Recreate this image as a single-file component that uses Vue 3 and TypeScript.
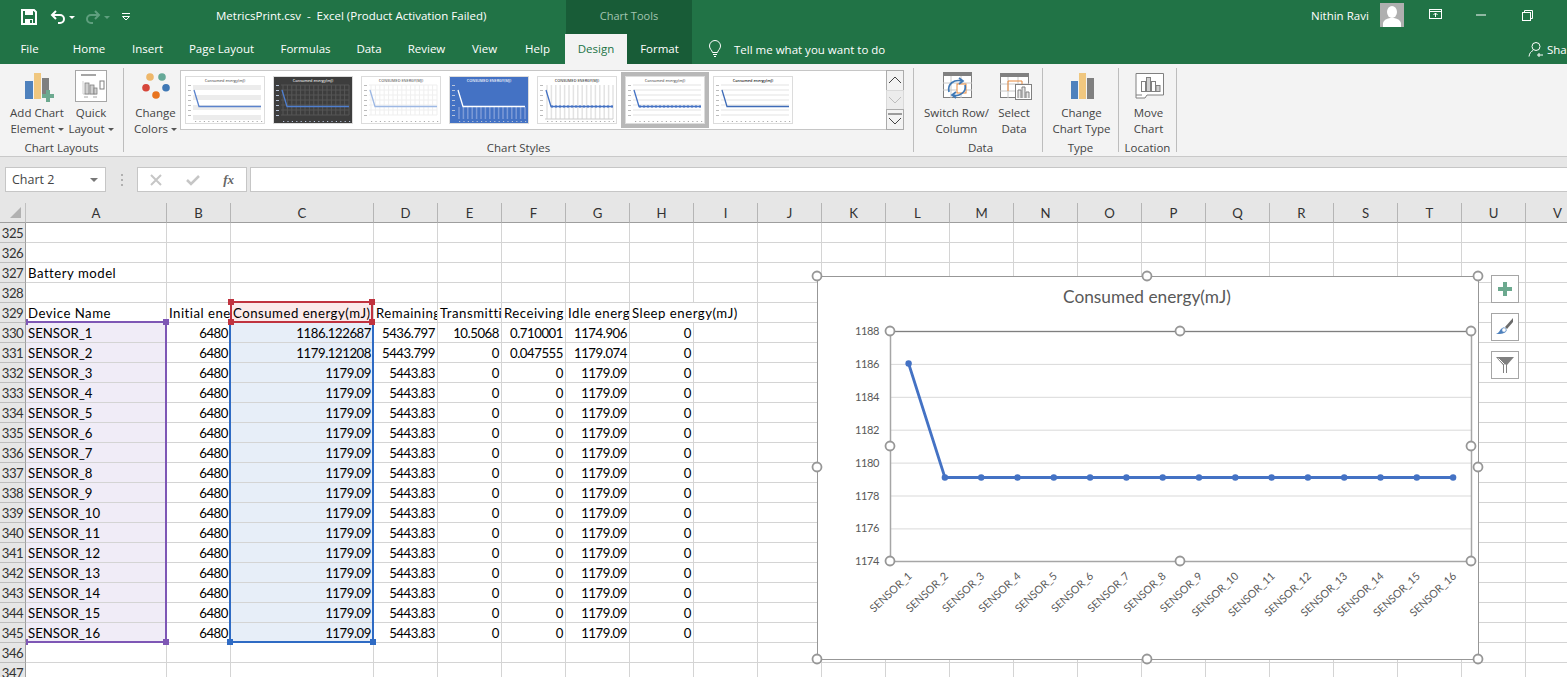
<script setup lang="ts">
interface Cell { key: string; text: string; cls: string }
const letters = 'ABCDEFGHIJKLMNOPQRSTUV'.split('')
const header = ['Device Name', 'Initial energy(mJ)', 'Consumed energy(mJ)', 'Remaining energy', 'Transmitting', 'Receiving energy', 'Idle energy', 'Sleep energy(mJ)']
const dataRows: string[][] = []
for (let i = 1; i <= 16; i++) {
  if (i === 1) dataRows.push(['SENSOR_1', '6480', '1186.122687', '5436.797', '10.5068', '0.710001', '1174.906', '0'])
  else if (i === 2) dataRows.push(['SENSOR_2', '6480', '1179.121208', '5443.799', '0', '0.047555', '1179.074', '0'])
  else dataRows.push([`SENSOR_${i}`, '6480', '1179.09', '5443.83', '0', '0', '1179.09', '0'])
}
const cells: Cell[] = []
for (let r = 325; r <= 347; r++) {
  cells.push({ key: `h${r}`, text: String(r), cls: 'rowhead' })
  for (let c = 0; c < 22; c++) {
    let text = ''
    const cl: string[] = ['cell']
    if (r === 327 && c === 0) { text = 'Battery model'; cl.push('label') }
    if (r === 329 && c < 8) {
      text = header[c]
      cl.push('label')
      if (c === 7) cl.push('span2')
      if (c === 2) cl.push('tint-red')
    }
    if (r === 329 && c === 8) continue
    if (r >= 330 && r <= 345) {
      if (c < 8) text = dataRows[r - 330][c]
      if (c > 0 && c < 8) cl.push('num')
      if (c === 0) cl.push('tint-purple')
      if (c === 2) cl.push('tint-blue')
    }
    cells.push({ key: `${r}-${c}`, text, cls: cl.join(' ') })
  }
}

const tabs = ['File', 'Home', 'Insert', 'Page Layout', 'Formulas', 'Data', 'Review', 'View', 'Help']

interface Thumb { bg: string; line: string; title: string; tcol: string; grid: string; kind: string; picked?: boolean }
const thumbs: Thumb[] = [
  { bg: '#fff', line: '#5b83cc', title: 'Consumed energy(mJ)', tcol: '#6a6a6a', grid: '#ececec', kind: 'bands' },
  { bg: '#3d3d3d', line: '#4f7fd0', title: 'Consumed energy(mJ)', tcol: '#e0e0e0', grid: '#575757', kind: 'both' },
  { bg: '#fff', line: '#9db8e4', title: 'CONSUMED ENERGY(MJ)', tcol: '#6a6a6a', grid: '#efefef', kind: 'both' },
  { bg: '#4472c4', line: '#ffffff', title: 'CONSUMED ENERGY(MJ)', tcol: '#f4f7fd', grid: '#7c9ad6', kind: 'drops' },
  { bg: '#fff', line: '#4472c4', title: 'CONSUMED ENERGY(MJ)', tcol: '#444', grid: '#e3e3e3', kind: 'vbars' },
  { bg: '#fff', line: '#4472c4', title: 'Consumed energy(mJ)', tcol: '#6a6a6a', grid: '#e3e3e3', kind: 'lines', picked: true },
  { bg: '#fff', line: '#3f6cb8', title: 'Consumed energy(mJ)', tcol: '#222', grid: '#e3e3e3', kind: 'lines' }
]
const thumbY = [13, 18, 23, 28, 33, 38, 43]
const thumbX = Array.from({ length: 16 }, (_, i) => 10 + i * 4.4)

const yTicks = [1188, 1186, 1184, 1182, 1180, 1178, 1176, 1174].map((v, i) => ({ v, y: 331.5 + i * 32.9 }))
const pts = Array.from({ length: 16 }, (_, i) => ({
  x: 908.6 + i * 36.3,
  y: i === 0 ? 363.5 : 477.5,
  name: `SENSOR_${i + 1}`
}))
const polyline = pts.map(p => `${p.x},${p.y}`).join(' ')
const chartHandles = [[817, 276], [1147, 276], [1478, 276], [817, 467], [1478, 467], [817, 659], [1147, 659], [1478, 659]]
const plotHandles = [[890, 331], [1180, 331], [1471, 331], [890, 446], [1471, 446], [890, 561], [1180, 561], [1471, 561]]
</script>

<template>
  <div class="app">
    <div class="titlebar">
      <div class="qat">
        <svg class="i-save" width="16" height="16" viewBox="0 0 16 16"><path d="M1 1H13L15 3V15H1Z" fill="none" stroke="#fff" stroke-width="2"/><rect x="4" y="1" width="8" height="5" fill="#fff"/><rect x="4" y="10" width="8" height="5" fill="#fff"/><rect x="9" y="11" width="2" height="3" fill="#217346"/></svg>
        <svg class="i-undo" width="16" height="16" viewBox="0 0 16 16"><path d="M6 2L2 6L6 10M2 6H10A4 4 0 0 1 10 14H8" fill="none" stroke="#fff" stroke-width="2"/></svg>
        <span class="caret"></span>
        <svg class="i-redo" width="16" height="16" viewBox="0 0 16 16"><path d="M10 2L14 6L10 10M14 6H6A4 4 0 0 0 6 14H8" fill="none" stroke="#5f9f7e" stroke-width="2"/></svg>
        <span class="caret dim"></span>
        <svg class="i-cust" width="10" height="8" viewBox="0 0 10 8"><path d="M1 .5H9" stroke="#fff"/><path d="M1.5 3.5H8.500L5 7Z" fill="none" stroke="#fff"/></svg>
      </div>
      <div class="doc">MetricsPrint.csv&nbsp; -&nbsp; Excel (Product Activation Failed)</div>
      <div class="ctx">Chart Tools</div>
      <div class="user">Nithin Ravi</div>
      <div class="avatar">
        <svg width="24" height="24" viewBox="0 0 24 24"><rect width="24" height="24" fill="#afafaf"/><ellipse cx="12" cy="9" rx="5" ry="6" fill="#fff"/><path d="M3 24V20Q4 16 10 15H14Q20 16 21 20V24Z" fill="#fff"/></svg>
      </div>
      <div class="winbtns">
        <svg width="14" height="12" viewBox="0 0 14 12"><rect x=".5" y=".5" width="12" height="9" fill="none" stroke="#fff"/><path d="M.5 2.500H12.500M6.500 8V4M4.500 6L6.500 4L8.500 6" fill="none" stroke="#fff"/></svg>
        <svg width="12" height="12" viewBox="0 0 12 12"><path d="M1 6H11" stroke="#fff"/></svg>
        <svg width="11" height="11" viewBox="0 0 11 11"><rect x=".5" y="2.500" width="8" height="8" fill="none" stroke="#fff"/><path d="M2.500 2.500V.5H10.500V8.500H8.500" fill="none" stroke="#fff"/></svg>
      </div>
    </div>

    <div class="tabs">
      <div v-for="t in tabs" :key="t" class="tab">{{ t }}</div>
      <div class="tab design">Design</div>
      <div class="tab format">Format</div>
      <div class="tell">
        <svg width="14" height="18" viewBox="0 0 14 18"><path d="M4.500 12.500C4 10 1.500 9 1.500 6A5.500 5.500 0 0 1 12.500 6C12.500 9 10 10 9.500 12.500ZM5 14.500H9M6 16.500H8" fill="none" stroke="#fff"/></svg>
        <span>Tell me what you want to do</span>
      </div>
      <div class="share">
        <svg width="16" height="16" viewBox="0 0 16 16"><circle cx="8" cy="5.500" r="4" fill="none" stroke="#fff"/><path d="M1 15.500C1.500 12 3 10.500 5 9.500M11 12V16M9 14H15" fill="none" stroke="#fff"/></svg>
        <span>Sha</span>
      </div>
    </div>

    <div class="ribbon">
      <section class="group g-layouts">
        <div class="btns">
          <div class="btn b-add">
            <svg width="32" height="32" viewBox="0 0 32 32"><rect x="4" y="11" width="8" height="18" fill="#4e81bd"/><rect x="13" y="3" width="7" height="26" fill="#f0c77f"/><rect x="21" y="8" width="7" height="18" fill="#7f7f7f"/><path d="M25 20H29V24H33V28H29V32H25V28H21V24H25Z" fill="#6ca98f"/></svg>
            <div>Add Chart</div><div>Element<i class="dn"></i></div>
          </div>
          <div class="btn b-quick">
            <svg width="32" height="32" viewBox="0 0 32 32"><rect x=".5" y=".5" width="31" height="31" fill="#fff" stroke="#a6a6a6"/><rect x="6" y="4" width="15" height="2" fill="#a6a6a6"/><path d="M8 11V24H22" fill="none" stroke="#d0d0d0"/><rect x="10" y="13" width="4" height="11" fill="#d0d0d0" stroke="#808080" stroke-width=".8"/><rect x="15" y="15" width="4" height="9" fill="#d0d0d0" stroke="#808080" stroke-width=".8"/><rect x="19" y="18" width="3" height="6" fill="#d0d0d0" stroke="#808080" stroke-width=".8"/><rect x="25" y="11" width="4" height="8" fill="none" stroke="#808080"/><path d="M9 27H13M18 27H22" stroke="#a6a6a6"/></svg>
            <div>Quick</div><div>Layout<i class="dn"></i></div>
          </div>
        </div>
        <div class="glabel">Chart Layouts</div>
      </section>

      <section class="group g-styles">
        <div class="btns">
          <div class="btn b-colors">
            <svg width="32" height="32" viewBox="0 0 32 32"><circle cx="10" cy="7" r="3.800" fill="#eeb76a"/><circle cx="22" cy="7" r="3.800" fill="#66a998"/><circle cx="6" cy="17.700" r="3.800" fill="#d6463a"/><circle cx="26" cy="17.700" r="3.800" fill="#3f78b5"/><circle cx="16" cy="25" r="3.800" fill="#e8731e"/></svg>
            <div>Change</div><div>Colors<i class="dn"></i></div>
          </div>
          <div class="gallery">
            <div class="thumbs">
              <div v-for="(t, i) in thumbs" :key="i" class="thumb" :class="{ picked: t.picked }">
                <svg width="80" height="48" viewBox="0 0 80 48">
                  <rect x=".5" y=".5" width="79" height="47" :fill="t.bg" stroke="#dcdcdc"/>
                  <text x="40" y="6" text-anchor="middle" class="ttl" :fill="t.tcol">{{ t.title }}</text>
                  <template v-if="t.kind === 'bands'">
                    <rect v-for="y in [9, 19, 29, 39]" :key="y" x="8" :y="y" width="68" height="5" :fill="t.grid"/>
                  </template>
                  <template v-if="t.kind === 'both' || t.kind === 'lines'">
                    <line v-for="y in thumbY" :key="y" x1="8" x2="76" :y1="y - 4" :y2="y - 4" :stroke="t.grid"/>
                  </template>
                  <template v-if="t.kind === 'both'">
                    <line v-for="x in thumbX" :key="x" :x1="x" :x2="x" y1="9" y2="39" :stroke="t.grid"/>
                  </template>
                  <template v-if="t.kind === 'vbars'">
                    <line v-for="x in thumbX" :key="x" :x1="x" :x2="x" y1="9" y2="43" :stroke="t.grid" stroke-width="1.500"/>
                    <path d="M8 43H76" stroke="#ccc"/>
                  </template>
                  <template v-if="t.kind === 'drops'">
                    <line v-for="x in thumbX" :key="x" :x1="x" :x2="x" y1="31" y2="43" :stroke="t.grid" stroke-width="1.500"/>
                  </template>
                  <rect v-for="y in thumbY" :key="'t' + y" x="3" :y="y - 4" width="3" height="1" :fill="t.kind === 'drops' || t.bg === '#3d3d3d' ? '#b8c4da' : '#bbb'"/>
                  <rect v-for="x in thumbX" :key="'u' + x" :x="x" y="45" width="1.200" height="1" :fill="t.kind === 'drops' || t.bg === '#3d3d3d' ? '#b8c4da' : '#aaa'"/>
                  <path d="M9 14L14 30.500H76" fill="none" :stroke="t.line" stroke-width="1.300"/>
                  <path v-if="t.kind === 'vbars' || t.picked" d="M14 30.500H76" fill="none" :stroke="t.line" stroke-width="2" stroke-dasharray="2 2"/>
                </svg>
              </div>
            </div>
            <div class="spin">
              <div class="sb"><svg width="16" height="10" viewBox="0 0 16 10"><path d="M2 8L8 2L14 8" fill="none" stroke="#444"/></svg></div>
              <div class="sb off"><svg width="16" height="10" viewBox="0 0 16 10"><path d="M2 2L8 8L14 2" fill="none" stroke="#bdbdbd"/></svg></div>
              <div class="sb"><svg width="16" height="13" viewBox="0 0 16 13"><path d="M1 1H15M2 5L8 11L14 5" fill="none" stroke="#444"/></svg></div>
            </div>
          </div>
        </div>
        <div class="glabel">Chart Styles</div>
      </section>

      <section class="group g-data">
        <div class="btns">
          <div class="btn b-switch">
            <svg width="32" height="32" viewBox="0 0 32 32"><rect x="2.500" y="2.500" width="28" height="25" fill="#fff" stroke="#808080"/><rect x="2" y="2" width="29" height="4" fill="#808080"/><path d="M2 13H31M2 20H31M10 6V28M20 6V28" stroke="#c8c8c8"/><rect x="16" y="14" width="9" height="9" fill="#fff" stroke="#e8883a"/><path d="M8 22C6 14 13 9 21 11M18 8L22 11L18 14M24 15C26 22 18 27 12 25M15 22L11 25L15 28" fill="none" stroke="#3f78b5" stroke-width="1.700"/></svg>
            <div>Switch Row/</div><div>Column</div>
          </div>
          <div class="btn b-select">
            <svg width="32" height="32" viewBox="0 0 32 32"><rect x="2.500" y="3.500" width="28" height="24" fill="#fff" stroke="#808080"/><rect x="2" y="3" width="29" height="4" fill="#808080"/><path d="M2 14H31M2 21H31M10 7V28M20 7V28" stroke="#c8c8c8"/><path d="M10 21V11H24V17" fill="none" stroke="#e8883a"/><rect x="17.500" y="14.500" width="16" height="15" fill="#fff" stroke="#808080"/><path d="M20 28V20H23V28M24 28V17H27V28M28 28V22H31V28" fill="#e8e8e8" stroke="#808080"/></svg>
            <div>Select</div><div>Data</div>
          </div>
        </div>
        <div class="glabel">Data</div>
      </section>

      <section class="group g-type">
        <div class="btns">
          <div class="btn b-type">
            <svg width="32" height="32" viewBox="0 0 32 32"><rect x="5" y="11" width="7" height="18" fill="#4e81bd"/><rect x="13" y="3" width="7" height="26" fill="#f0c77f"/><rect x="21" y="8" width="7" height="21" fill="#7f7f7f"/></svg>
            <div>Change</div><div>Chart Type</div>
          </div>
        </div>
        <div class="glabel">Type</div>
      </section>

      <section class="group g-loc">
        <div class="btns">
          <div class="btn b-move">
            <svg width="32" height="32" viewBox="0 0 32 32"><path d="M9 25H3V3.500H30.500V25H14L12 28H3V25" fill="#fff" stroke="#808080"/><rect x="8.500" y="11.500" width="4" height="10" fill="#fff" stroke="#808080"/><rect x="13.500" y="7.500" width="4" height="14" fill="#d0d0d0" stroke="#808080"/><rect x="18.500" y="11.500" width="4" height="10" fill="#fff" stroke="#808080"/><rect x="23" y="15.500" width="4" height="6" fill="#d0d0d0" stroke="#808080"/></svg>
            <div>Move</div><div>Chart</div>
          </div>
        </div>
        <div class="glabel">Location</div>
      </section>
    </div>

    <div class="formula">
      <div class="namebox"><span>Chart 2</span><i class="nb-caret"></i></div>
      <div class="dots"><b></b><b></b><b></b></div>
      <div class="fxbox">
        <svg width="12" height="12" viewBox="0 0 12 12"><path d="M1 1L11 11M11 1L1 11" stroke="#c6c6c6" stroke-width="2"/></svg>
        <svg width="14" height="12" viewBox="0 0 14 12"><path d="M1 6L5 10L13 2" fill="none" stroke="#c6c6c6" stroke-width="2.500"/></svg>
        <span class="fx">fx</span>
      </div>
      <div class="finput"></div>
    </div>

    <div class="sheet">
      <div class="grid">
        <div class="corner"><svg width="14" height="14" viewBox="0 0 14 14"><path d="M12 2V13H1Z" fill="#b1b1b1"/></svg></div>
        <div v-for="l in letters" :key="l" class="colhead">{{ l }}</div>
        <div v-for="c in cells" :key="c.key" :class="c.cls">{{ c.text }}</div>
      </div>

      <div class="sel purple"><i class="h tl"></i><i class="h tr"></i><i class="h bl"></i><i class="h br"></i></div>
      <div class="sel blue"><i class="h bl"></i><i class="h br"></i></div>
      <div class="sel red"><i class="h tl"></i><i class="h tr"></i><i class="h bl"></i><i class="h br"></i></div>

      <svg class="chart" width="680" height="400" viewBox="810 268 680 400">
        <rect x="817.500" y="276.500" width="661" height="383" fill="#fff" stroke="#979797"/>
        <text x="1147" y="303" text-anchor="middle" class="c-title">Consumed energy(mJ)</text>
        <line v-for="t in yTicks.slice(1, 7)" :key="t.v" x1="890" x2="1471" :y1="t.y" :y2="t.y" stroke="#d9d9d9"/>
        <rect x="890.500" y="331.500" width="581" height="230" fill="none" stroke="#a6a6a6" stroke-width="1.500"/>
        <line x1="890" x2="1471" y1="331.500" y2="331.500" stroke="#7f7f7f"/>
        <text v-for="t in yTicks" :key="'l' + t.v" x="879" :y="t.y + 3.500" text-anchor="end" class="c-axis">{{ t.v }}</text>
        <polyline :points="polyline" fill="none" stroke="#4472c4" stroke-width="2.800" stroke-linejoin="round"/>
        <circle v-for="p in pts" :key="p.name" :cx="p.x" :cy="p.y" r="3.200" fill="#4472c4"/>
        <text v-for="p in pts" :key="'n' + p.name" :transform="`translate(${p.x + 4} 577) rotate(-43)`" text-anchor="end" class="c-cat">{{ p.name }}</text>
        <circle v-for="h in chartHandles" :key="'c' + h" :cx="h[0]" :cy="h[1]" r="4.500" fill="#fff" stroke="#979797" stroke-width="1.800"/>
        <circle v-for="h in plotHandles" :key="'p' + h" :cx="h[0]" :cy="h[1]" r="4.500" fill="#fff" stroke="#979797" stroke-width="1.800"/>
      </svg>

      <div class="chart-tools">
        <div class="ct"><svg width="16" height="16" viewBox="0 0 16 16"><path d="M6 1H10V6H15V10H10V15H6V10H1V6H6Z" fill="#6ca98f"/></svg></div>
        <div class="ct"><svg width="20" height="20" viewBox="0 0 20 20"><path d="M18 1V5L12 12L10 10Z" fill="#6b6b6b"/><path d="M9 10.500L11.500 13C11 16 7 17.500 1 17C4 16 5 13 6 12C7 11 8 10.500 9 10.500Z" fill="#4e81bd"/><circle cx="9" cy="13" r="2.200" fill="#fff" stroke="#4e81bd" stroke-width=".6"/></svg></div>
        <div class="ct"><svg width="20" height="18" viewBox="0 0 20 18"><path d="M1 1H19L12 9V17H8V9Z" fill="#808080"/><path d="M9.500 17V8.500L3.500 2.500M10.500 17V8.500" fill="none" stroke="#fff"/></svg></div>
      </div>
    </div>
  </div>
</template>

<style scoped>
.app { width: 1567px; height: 677px; overflow: hidden; display: flex; flex-direction: column; font-family: "Open Sans", "Noto Sans", sans-serif; background: #fff; }
.titlebar { height: 34px; background: #217346; color: #fff; font-size: 11.5px; display: flex; flex: none; }
.qat { width: 216px; display: flex; align-items: center; flex: none; padding-left: 21px; box-sizing: border-box; }
.i-save { margin-right: 13px; }
.i-undo { margin-right: 3px; }
.caret { width: 0; height: 0; border: 3px solid transparent; border-top-color: #fff; border-bottom: 0; margin-right: 10px; }
.caret.dim { border-top-color: #5f9f7e; margin-left: 0; margin-right: 11px; }
.i-redo { margin-right: 3px; }
.doc { width: 350px; flex: none; line-height: 32px; }
.ctx { width: 126px; flex: none; background: #185c37; color: #a3c5b1; text-align: center; line-height: 32px; font-size: 11px; }
.user { margin-left: 619px; flex: none; width: 69px; line-height: 32px; }
.avatar { width: 24px; height: 24px; margin-top: 3px; flex: none; }
.winbtns { display: flex; align-items: center; height: 30px; flex: none; margin-left: 25px; }
.winbtns svg:nth-child(2) { margin-left: 32px; }
.winbtns svg:nth-child(3) { margin-left: 35px; }

.tabs { height: 30px; background: #217346; color: #fff; font-size: 11.5px; display: grid; grid-template-columns: 59px 60px 57px 91px 77px 50px 65px 51px 55px 62px 65px 836px 1fr; align-items: stretch; flex: none; }
.tab { display: flex; align-items: center; justify-content: center; padding-bottom: 1px; }
.tab.design { background: #f3f3f3; color: #217346; }
.tab.format { background: #185c37; }
.tell { display: flex; align-items: center; padding-left: 16px; gap: 12px; }
.share { display: flex; align-items: center; gap: 3px; white-space: nowrap; overflow: hidden; }

.ribbon { height: 92px; background: #f3f3f3; border-bottom: 1px solid #c9c9c9; display: flex; flex: none; font-size: 11.5px; color: #444; box-sizing: content-box; }
.group { display: flex; flex-direction: column; height: 84px; margin-top: 4px; border-right: 1px solid #bdbdbd; box-sizing: border-box; flex: none; position: relative; }
.btns { display: flex; height: 72px; flex: none; }
.glabel { text-align: center; line-height: 16px; height: 12px; }
.btn { text-align: center; line-height: 16px; display: flex; flex-direction: column; align-items: center; white-space: nowrap; box-sizing: border-box; }
.btn svg { margin: 2px 0 3px; overflow: visible; flex: none; }
.dn { display: inline-block; width: 0; height: 0; border: 3px solid transparent; border-top-color: #555; border-bottom: 0; margin-left: 3px; vertical-align: 2px; }
.g-layouts { width: 124px; }
.b-add { width: 64px; margin-left: 5px; }
.b-quick { width: 44px; }
.g-styles { width: 790px; }
.b-colors { width: 56px; padding-left: 7px; }
.gallery { width: 724px; height: 60px; margin-top: 2px; box-sizing: border-box; border: 1px solid #c6c6c6; background: #fff; display: flex; justify-content: space-between; }
.thumbs { display: flex; gap: 8px; padding: 5px 0 0 4px; }
.thumb { width: 80px; height: 48px; position: relative; }
.thumb.picked::before { content: ""; position: absolute; inset: -4px; border: 4px solid #b8b8b8; }
.ttl { font-size: 3.800px; font-weight: 600; font-family: "Open Sans", sans-serif; }
.spin { display: flex; flex-direction: column; width: 18px; margin: -1px -1px -1px 0; }
.sb { flex: 1; border: 1px solid #ababab; background: #f3f3f3; display: flex; align-items: center; justify-content: center; margin-top: -1px; }
.sb:first-child { margin-top: 0; }
.sb.off { background: #ececec; border-color: #d9d9d9; }
.g-data { width: 129px; padding-left: 5px; }
.b-switch { width: 75px; }
.b-select { width: 40px; }
.g-type { width: 76px; }
.b-type { width: 76px; padding-left: 2px; }
.g-loc { width: 58px; }
.b-move { width: 58px; padding-left: 2px; }

.formula { height: 46px; box-sizing: border-box; background: #e6e6e6; display: flex; padding: 10px 0 0 5px; flex: none; }
.namebox { width: 101px; height: 25px; box-sizing: border-box; background: #fff; border: 1px solid #c6c6c6; display: flex; align-items: center; justify-content: space-between; padding: 0 7px 0 6px; color: #444; font-size: 12.500px; }
.nb-caret { width: 0; height: 0; border: 4px solid transparent; border-top-color: #777; border-bottom: 0; }
.dots { width: 31px; height: 25px; display: flex; flex-direction: column; align-items: center; justify-content: center; gap: 3px; }
.dots b { width: 2px; height: 2px; background: #b0b0b0; }
.fxbox { width: 110px; height: 25px; box-sizing: border-box; background: #fff; border: 1px solid #c6c6c6; display: flex; align-items: center; justify-content: space-between; padding: 0 12px 0 12px; }
.fx { font-family: "Liberation Serif", serif; font-style: italic; font-weight: 700; font-size: 13px; color: #666; }
.finput { flex: 1; height: 25px; box-sizing: border-box; margin-left: 3px; background: #fff; border: 1px solid #c6c6c6; border-right: 0; }

.sheet { position: relative; flex: 1; overflow: hidden; background: #fff; font-family: Lato, "Open Sans", sans-serif; font-size: 13.200px; color: #000; }
.grid { display: grid; grid-template-columns: 26px 141px 64px 143px repeat(19, 64px); grid-auto-rows: 20px; width: 1589px; }
.corner, .colhead { background: #e6e6e6; border-bottom: 1px solid #9e9e9e; box-sizing: border-box; }
.corner { border-right: 1px solid #c0c0c0; padding: 2px 0 0 9px; }
.colhead { border-right: 1px solid #b5b5b5; text-align: center; line-height: 21px; color: #333; }
.rowhead { background: #e6e6e6; border-right: 1px solid #9e9e9e; border-bottom: 1px solid #bdbdbd; box-sizing: border-box; text-align: center; line-height: 21px; color: #333; letter-spacing: -0.5px; }
.cell { border-right: 1px solid #d4d4d4; border-bottom: 1px solid #d4d4d4; box-sizing: border-box; line-height: 21px; padding: 0 2px; white-space: nowrap; overflow: hidden; }
.label { letter-spacing: .5px; }
.num { text-align: right; padding-right: 2px; letter-spacing: -0.45px; }
.span2 { grid-column: span 2; }
.tint-purple { background: #f0ecf7; }
.tint-blue { background: #e7eef8; }
.tint-red { background: #fbeaea; }

.sel { position: absolute; box-sizing: border-box; pointer-events: none; }
.sel .h { position: absolute; width: 6px; height: 6px; box-sizing: content-box; }
.purple { left: 26px; top: 118px; width: 141px; height: 322px; border-top: 2px solid #7e57b5; border-right: 2px solid #7e57b5; border-bottom: 2px solid #7e57b5; }
.purple .h { background: #7e57b5; }
.purple .h.tl, .purple .h.bl { width: 2px; }
.purple .h.tl { left: 0; top: -4px; }
.purple .h.tr { right: -4px; top: -4px; }
.purple .h.bl { left: 0; bottom: -4px; }
.purple .h.br { right: -4px; bottom: -4px; }
.blue { left: 229px; top: 118px; width: 145px; height: 322px; border-left: 2px solid #2f6bc4; border-right: 2px solid #2f6bc4; border-bottom: 2px solid #2f6bc4; }
.blue .h { background: #2f6bc4; }
.blue .h.bl { left: -4px; bottom: -4px; }
.blue .h.br { right: -4px; bottom: -4px; }
.red { left: 230px; top: 98px; width: 143px; height: 22px; border: 2px solid #c0333f; }
.red .h { background: #c0333f; }
.red .h.tl { left: -4px; top: -4px; }
.red .h.tr { right: -4px; top: -4px; }
.red .h.bl { left: -4px; bottom: -4px; }
.red .h.br { right: -4px; bottom: -4px; }

.chart { position: absolute; left: 810px; top: 65px; }
.c-title { font-family: Lato, sans-serif; font-size: 17.300px; fill: #595959; }
.c-axis { font-family: Lato, sans-serif; font-size: 11px; letter-spacing: -0.4px; fill: #595959; }
.c-cat { font-family: Lato, sans-serif; font-size: 10.800px; fill: #595959; }
.chart-tools { position: absolute; left: 1491px; top: 72px; display: flex; flex-direction: column; gap: 10px; }
.ct { width: 28px; height: 28px; box-sizing: border-box; background: #fff; border: 1px solid #a6a6a6; display: flex; align-items: center; justify-content: center; }
</style>

<style>
html, body { margin: 0; overflow: hidden; }
</style>
